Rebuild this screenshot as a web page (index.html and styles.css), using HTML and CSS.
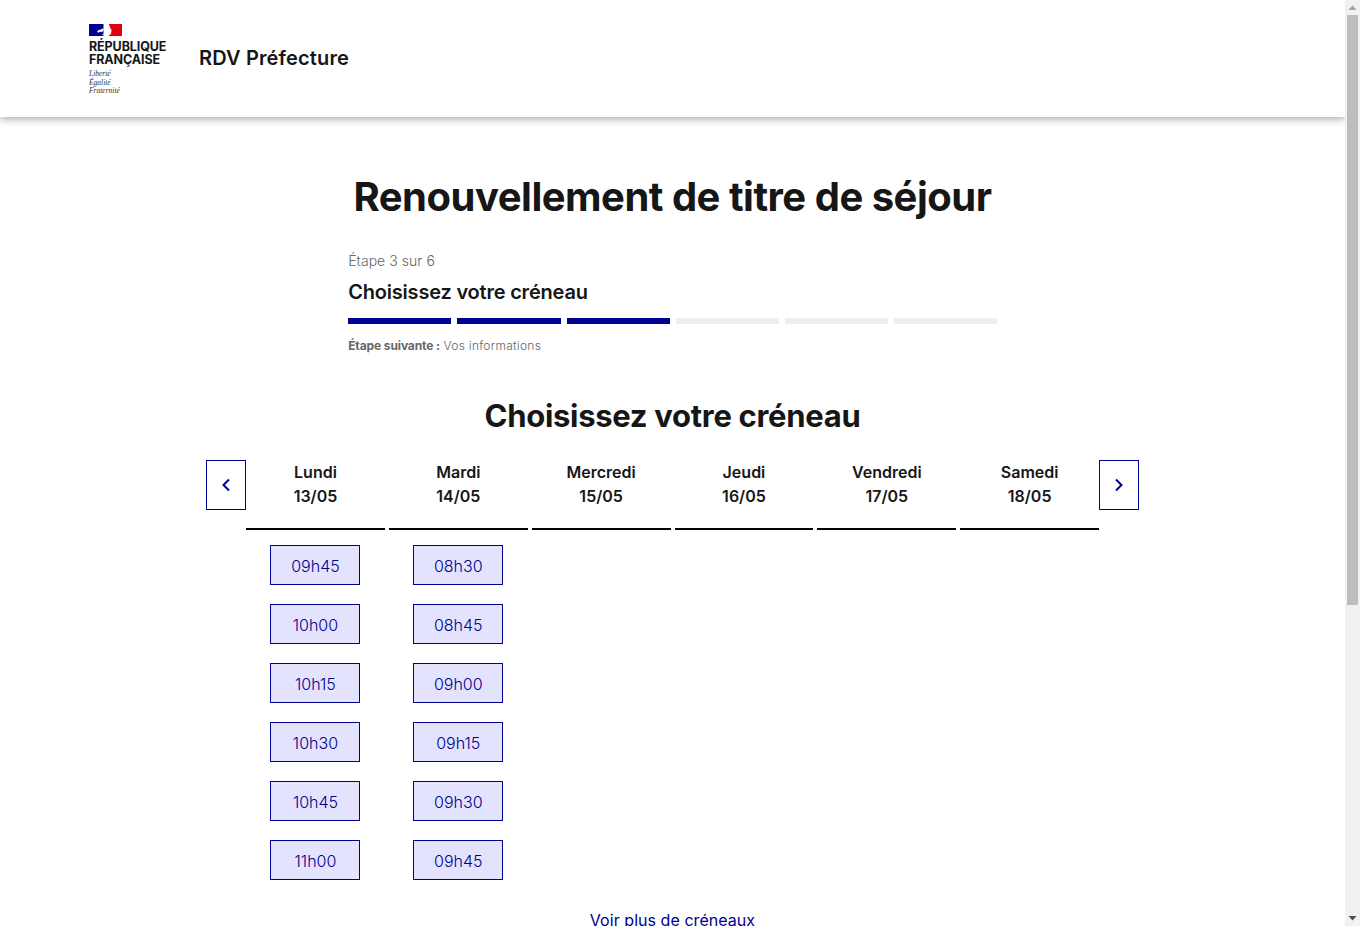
FILE: index.html
```html
<!DOCTYPE html>
<html lang="fr">
<head>
<meta charset="utf-8">
<title>RDV Préfecture</title>
<link rel="stylesheet" href="styles.css">
</head>
<body>
<div class="viewport">
<header class="site-header">
  <div class="logo">
    <svg class="flag" viewBox="0 0 33 12" width="33" height="12" aria-hidden="true">
      <rect width="33" height="12" fill="#fff"/>
      <rect width="14.500" height="12" fill="#000091"/>
      <path d="M19.800 0H33v12H19.500l1.500-1.500 1.200-.8-.2-1.200.5-.6-.3-1 .6-.4-1-1.500-.8-1.700z" fill="#e1000f"/>
      <path d="M8 7.800l1.800-1.700 2-.6 2.700-1.200v2L12.800 8.200l-1.800-.6-1.200 1.100z" fill="#fff"/>
      <path d="M14.500 9.600L13 10.800l1.500.5z" fill="#fff"/>
    </svg>
    <div class="logo-name">République<br>Française</div>
    <div class="logo-motto">Liberté<br>Égalité<br>Fraternité</div>
  </div>
  <div class="service-title">RDV Préfecture</div>
</header>

<main class="page">
  <h1 class="title">Renouvellement de titre de séjour</h1>

  <section class="stepper">
    <p class="step-count">Étape 3 sur 6</p>
    <h2 class="step-name">Choisissez votre créneau</h2>
    <div class="step-bar">
      <span class="seg on"></span><span class="seg on"></span><span class="seg on"></span>
      <span class="seg"></span><span class="seg"></span><span class="seg"></span>
    </div>
    <p class="step-next"><b>Étape suivante :</b> Vos informations</p>
  </section>

  <h2 class="subtitle">Choisissez votre créneau</h2>

  <section class="calendar">
    <button class="nav" aria-label="Précédent">
      <svg viewBox="0 0 24 24" width="24" height="24"><path d="M15 6.500L9.500 12l5.500 5.500" fill="none" stroke="#000091" stroke-width="2"/></svg>
    </button>
    <div class="days">
      <div class="day">
        <div class="day-head">Lundi<br>13/05</div>
        <div class="slots">
          <a class="slot">09h45</a><a class="slot">10h00</a><a class="slot">10h15</a>
          <a class="slot">10h30</a><a class="slot">10h45</a><a class="slot">11h00</a>
        </div>
      </div>
      <div class="day">
        <div class="day-head">Mardi<br>14/05</div>
        <div class="slots">
          <a class="slot">08h30</a><a class="slot">08h45</a><a class="slot">09h00</a>
          <a class="slot">09h15</a><a class="slot">09h30</a><a class="slot">09h45</a>
        </div>
      </div>
      <div class="day"><div class="day-head">Mercredi<br>15/05</div></div>
      <div class="day"><div class="day-head">Jeudi<br>16/05</div></div>
      <div class="day"><div class="day-head">Vendredi<br>17/05</div></div>
      <div class="day"><div class="day-head">Samedi<br>18/05</div></div>
    </div>
    <button class="nav" aria-label="Suivant">
      <svg viewBox="0 0 24 24" width="24" height="24"><path d="M9 6.500L14.500 12 9 17.500" fill="none" stroke="#000091" stroke-width="2"/></svg>
    </button>
  </section>

  <div class="more"><a class="more-link" href="#">Voir plus de créneaux</a></div>
</main>
</div>
<aside class="scrollbar" aria-hidden="true">
  <div class="sb-btn">
    <svg viewBox="0 0 15 15" width="15" height="15"><path d="M7.500 5.500L11.500 10h-8z" fill="#a3a3a3"/></svg>
  </div>
  <div class="sb-track"><div class="sb-thumb"></div></div>
  <div class="sb-btn">
    <svg viewBox="0 0 15 15" width="15" height="15"><path d="M3.500 5h8l-4 4.500z" fill="#505050"/></svg>
  </div>
</aside>
</body>
</html>
```
FILE: styles.css
```css
* { box-sizing: border-box; }
html { overflow: hidden; }
body {
  margin: 0;
  height: 100vh;
  display: flex;
  overflow: hidden;
  font-family: Inter, "Liberation Sans", sans-serif;
  color: #161616;
  background: #fff;
}
.viewport { flex: 1; min-width: 0; height: 100vh; overflow: hidden; }
.scrollbar {
  flex: none;
  width: 15px;
  height: 100vh;
  display: flex;
  flex-direction: column;
  background: #f1f1f1;
}
.sb-btn { height: 15px; flex: none; }
.sb-btn svg { display: block; }
.sb-track { flex: 1; padding: 0 2px; }
.sb-thumb { height: 590px; background: #bdbdbd; }
.site-header {
  height: 117px;
  display: flex;
  align-items: center;
  padding-left: 89px;
  gap: 32px;
  box-shadow: 0 2px 8px rgba(0, 0, 0, .35);
}
.logo { width: 78px; padding-top: 3px; }
.flag { display: block; margin-bottom: 4px; }
.logo-name {
  font-size: 12.500px;
  line-height: 13px;
  font-weight: 700;
  text-transform: uppercase;
  letter-spacing: -.1px;
  white-space: nowrap;
}
.logo-motto {
  font-family: "Liberation Serif", serif;
  font-style: italic;
  font-size: 7.500px;
  line-height: 8.500px;
  margin-top: 4px;
  color: #333;
}
.service-title { font-size: 20px; font-weight: 600; letter-spacing: .15px; margin-top: -2px; }
.page { padding-bottom: 474px; }
.title {
  margin: 56px 0 0;
  text-align: center;
  font-size: 40px;
  line-height: 48px;
  font-weight: 700;
  letter-spacing: -.5px;
}
.stepper { width: 649px; margin: 30px 0 0 348.200px; }
.step-count { margin: 0; font-size: 14px; line-height: 20px; color: #666; font-weight: 300; letter-spacing: .05px; }
.step-name { margin: 9px 0 0; font-size: 20px; line-height: 24px; font-weight: 600; letter-spacing: -.2px; }
.step-bar {
  display: grid;
  grid-template-columns: repeat(6, 1fr);
  gap: 6px;
  margin-top: 14px;
}
.seg { height: 6px; background: #eee; }
.seg.on { background: #000091; }
.step-next { margin: 13px 0 0; font-size: 12px; line-height: 17px; color: #666; font-weight: 300; letter-spacing: .27px; }
.step-next b { font-weight: 700; letter-spacing: -.11px; }
.subtitle {
  margin: 42px 0 0;
  text-align: center;
  font-size: 31px;
  line-height: 40px;
  font-weight: 700;
  letter-spacing: -.3px;
}
.calendar { display: flex; align-items: flex-start; margin: 24px 0 0 206.050px; width: 933px; }
.nav {
  flex: none;
  width: 40px;
  height: 50px;
  padding: 0;
  display: flex;
  align-items: center;
  justify-content: center;
  background: #fff;
  border: 1px solid #000091;
}
.days { flex: 1; display: grid; grid-template-columns: repeat(6, 1fr); gap: 4px; }
.day-head {
  height: 70px;
  border-bottom: 2px solid #000;
  text-align: center;
  font-size: 16px;
  line-height: 24px;
  font-weight: 600;
}
.slots { display: flex; flex-direction: column; align-items: center; gap: 19px; margin-top: 15px; }
.slot {
  width: 90px;
  height: 40px;
  display: flex;
  align-items: center;
  justify-content: center;
  padding-top: 1px;
  background: #e3e3fd;
  border: 1px solid #000091;
  color: #000091;
  font-size: 16px;
  font-weight: 300;
}
.more { margin-top: 28px; text-align: center; }
.more-link { font-size: 16px; line-height: 24px; color: #000091; text-decoration: none; letter-spacing: .05px; }
```
